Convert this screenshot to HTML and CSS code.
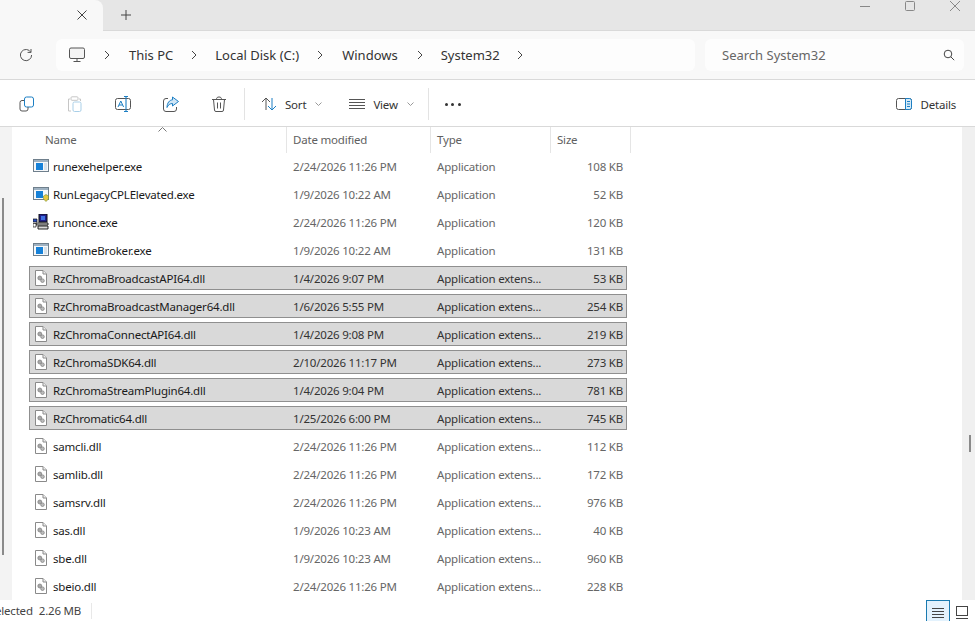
FILE: index.html
```html
<!DOCTYPE html>
<html lang="en">
<head>
<meta charset="utf-8">
<title>System32 - File Explorer</title>
<link rel="stylesheet" href="styles.css">
</head>
<body>
<svg class="defs" width="0" height="0" aria-hidden="true">
  <symbol id="dll" viewBox="0 0 16 16">
    <path d="M2.500 .5h7.500l3.500 3.500v11.500h-11z" fill="#fff" stroke="#8a8a8a"/>
    <path d="M10 .5v3.500h3.500" fill="#eee" stroke="#8a8a8a"/>
    <circle cx="6.800" cy="8" r="2" fill="#a8a8a8" stroke="#7a7a7a" stroke-width=".7"/>
    <circle cx="9.500" cy="10.700" r="1.800" fill="#bdbdbd" stroke="#7a7a7a" stroke-width=".7"/>
  </symbol>
  <symbol id="exe" viewBox="0 0 16 16">
    <rect x=".5" y="1.500" width="15" height="12" fill="#f6f8fa" stroke="#6f7f8c"/>
    <rect x="1" y="2" width="14" height="2" fill="#9fb2c2"/>
    <rect x="3" y="5" width="7" height="7" fill="#1681d8"/>
    <rect x="11" y="5" width="3" height="7" fill="#d8e2ea"/>
  </symbol>
  <symbol id="exe-shield" viewBox="0 0 16 16">
    <rect x=".5" y="1.500" width="15" height="12" fill="#f6f8fa" stroke="#6f7f8c"/>
    <rect x="1" y="2" width="14" height="2" fill="#9fb2c2"/>
    <rect x="3" y="5" width="7" height="7" fill="#1681d8"/>
    <path d="M10.500 10l2.500-1.500 2.500 1.500v3L13 15.500 10.500 13z" fill="#e8c840" stroke="#6f8f3a" stroke-width=".6"/>
  </symbol>
  <symbol id="setup" viewBox="0 0 16 16">
    <rect x="6" y="0" width="8" height="8" fill="#20208c" stroke="#111"/>
    <rect x="8" y="2" width="4" height="4" fill="#3e6fe0"/>
    <path d="M3 9h12v2H3zM5 12h10v3H5z" fill="#d9d9d9" stroke="#111" stroke-width=".9"/>
    <path d="M0 5h4v3H0z" fill="#2a4fc0" stroke="#111" stroke-width=".7"/>
    <path d="M0 9.500h3v3.500H0z" fill="#fff" stroke="#111" stroke-width=".7"/>
  </symbol>
</svg>

<header class="tabbar">
  <div class="tab">
    <svg class="tab-close" width="12" height="12" viewBox="0 0 12 12"><path d="M1.500 1.500l9 9M10.500 1.500l-9 9" stroke="#444" fill="none"/></svg>
  </div>
  <svg class="tab-new" width="12" height="12" viewBox="0 0 12 12"><path d="M6 1v10M1 6h10" stroke="#444" fill="none"/></svg>
  <div class="window-controls">
    <svg width="12" height="12" viewBox="0 0 12 12"><path d="M1 6.500h10" stroke="#888" fill="none"/></svg>
    <svg width="12" height="12" viewBox="0 0 12 12"><rect x="1.500" y="1.500" width="9" height="9" rx="1" stroke="#888" fill="none"/></svg>
    <svg width="12" height="12" viewBox="0 0 12 12"><path d="M1 1l10 10M11 1L1 11" stroke="#888" fill="none"/></svg>
  </div>
</header>

<nav class="addressbar">
  <svg class="refresh" width="14" height="14" viewBox="0 0 14 14"><path d="M11.800 4.200A5.600 5.600 0 1 0 12.600 7" stroke="#555" fill="none"/><path d="M8.600 4.400h3.400V1" stroke="#555" fill="none"/></svg>
  <div class="crumbs">
    <svg class="pc" width="16" height="16" viewBox="0 0 16 16"><rect x=".5" y="1" width="15" height="10.500" rx="1.500" fill="#f4f4f4" stroke="#555"/><path d="M8 11.500v2.500M4.500 14.500h7" stroke="#555" fill="none"/></svg>
    <svg class="chev first" width="6" height="10" viewBox="0 0 6 10"><path d="M1 1l4 4-4 4" stroke="#444" fill="none"/></svg><span class="crumb c-pc">This PC</span>
    <svg class="chev" width="6" height="10" viewBox="0 0 6 10"><path d="M1 1l4 4-4 4" stroke="#444" fill="none"/></svg><span class="crumb c-disk">Local Disk (C:)</span>
    <svg class="chev" width="6" height="10" viewBox="0 0 6 10"><path d="M1 1l4 4-4 4" stroke="#444" fill="none"/></svg><span class="crumb c-win">Windows</span>
    <svg class="chev" width="6" height="10" viewBox="0 0 6 10"><path d="M1 1l4 4-4 4" stroke="#444" fill="none"/></svg><span class="crumb c-sys">System32</span>
    <svg class="chev" width="6" height="10" viewBox="0 0 6 10"><path d="M1 1l4 4-4 4" stroke="#444" fill="none"/></svg>
  </div>
  <div class="search">
    <span>Search System32</span>
    <svg width="12" height="12" viewBox="0 0 12 12"><circle cx="5" cy="5" r="3.800" stroke="#444" fill="none"/><path d="M7.800 7.800l3.400 3.400" stroke="#444" fill="none"/></svg>
  </div>
</nav>

<div class="commandbar">
  <button class="cmd-icon"><svg width="16" height="16" viewBox="0 0 16 16"><rect x="5.500" y="1" width="9" height="10" rx="2" fill="none" stroke="#1c7fc4"/><path d="M5 4.500H3A2 2 0 0 0 1 6.500V13a2 2 0 0 0 2 2h4a2 2 0 0 0 2-2v-2" fill="none" stroke="#555"/></svg></button>
  <button class="cmd-icon"><svg width="16" height="16" viewBox="0 0 16 16"><path d="M3 3H1.500V15H4M12 3h1.500V5" fill="none" stroke="#c6c6c6"/><rect x="4" y=".8" width="7" height="3.500" rx="1" fill="none" stroke="#c6c6c6"/><rect x="6" y="6" width="8" height="9.500" rx="1.500" fill="none" stroke="#a9cfe8"/></svg></button>
  <button class="cmd-icon"><svg width="16" height="16" viewBox="0 0 16 16"><rect x=".5" y="2.500" width="15" height="11" rx="2" fill="none" stroke="#555"/><path d="M11 .5v15M9 .5h4M9 15.500h4" fill="none" stroke="#1c7fc4" stroke-width="1.100"/><path d="M3 11l2.800-6 2.800 6M4 9h3.600" fill="none" stroke="#1c7fc4"/></svg></button>
  <button class="cmd-icon"><svg width="16" height="16" viewBox="0 0 16 16"><path d="M5 2.500H3A2.500 2.500 0 0 0 .5 5v8A2.500 2.500 0 0 0 3 15.500h8a2.500 2.500 0 0 0 2.500-2.500v-2" fill="none" stroke="#555"/><path d="M9.500 1l6 4.500-6 4.500V7.500C7 7.500 5 9 4 11.500 4 7 6.500 4 9.500 3.800z" fill="#cfe5f5" stroke="#1c7fc4"/></svg></button>
  <button class="cmd-icon"><svg width="16" height="16" viewBox="0 0 16 16"><path d="M1 3.500h14M5.500 3.500C5.500 1.500 6.500 1 8 1s2.500.5 2.500 2.500M2.500 3.500l1 10.500a1.500 1.500 0 0 0 1.500 1.500h6a1.500 1.500 0 0 0 1.500-1.500l1-10.500M6.500 6.500v6M9.500 6.500v6" fill="none" stroke="#555"/></svg></button>
  <span class="divider"></span>
  <button class="cmd-text sort"><svg width="16" height="14" viewBox="0 0 16 14"><path d="M5 13V1M1 5l4-4 4 4" fill="none" stroke="#555"/><path d="M11 1v12M7 9l4 4 4-4" fill="none" stroke="#1c7fc4"/></svg><span>Sort</span><svg class="caret" width="7" height="4" viewBox="0 0 7 4"><path d="M.5.5l3 3 3-3" fill="none" stroke="#999"/></svg></button>
  <button class="cmd-text view"><svg width="16" height="10" viewBox="0 0 16 10"><path d="M0 .5h16M0 3.500h16M0 6.500h16M0 9.500h16" fill="none" stroke="#555"/></svg><span>View</span><svg class="caret" width="7" height="4" viewBox="0 0 7 4"><path d="M.5.5l3 3 3-3" fill="none" stroke="#999"/></svg></button>
  <span class="divider second"></span>
  <button class="more"><i></i><i></i><i></i></button>
  <button class="cmd-text details"><svg width="16" height="12" viewBox="0 0 16 12"><rect x=".5" y=".5" width="15" height="11" rx="2" fill="none" stroke="#555"/><path d="M9.500.5h4a2 2 0 0 1 2 2v7a2 2 0 0 1-2 2h-4z" fill="#d7ebf8" stroke="#1c7fc4"/><path d="M11 3.500h3M11 6h3M11 8.500h3" fill="none" stroke="#1c7fc4"/></svg><span>Details</span></button>
</div>

<main class="main">
  <aside class="navpane"><span class="nav-thumb"></span></aside>
  <section class="files">
    <div class="sort-arrow"><svg width="9" height="5" viewBox="0 0 9 5"><path d="M.5 4.500l4-4 4 4" fill="none" stroke="#777"/></svg></div>
    <div class="columns">
      <div class="col col-name">Name</div>
      <div class="col col-date">Date modified</div>
      <div class="col col-type">Type</div>
      <div class="col col-size">Size</div>
    </div>
    <div class="rows">
      <div class="row"><svg class="ico"><use href="#exe"/></svg><span class="name">runexehelper.exe</span><span class="date">2/24/2026 11:26 PM</span><span class="type">Application</span><span class="size">108 KB</span></div>
      <div class="row"><svg class="ico"><use href="#exe-shield"/></svg><span class="name">RunLegacyCPLElevated.exe</span><span class="date">1/9/2026 10:22 AM</span><span class="type">Application</span><span class="size">52 KB</span></div>
      <div class="row"><svg class="ico"><use href="#setup"/></svg><span class="name">runonce.exe</span><span class="date">2/24/2026 11:26 PM</span><span class="type">Application</span><span class="size">120 KB</span></div>
      <div class="row"><svg class="ico"><use href="#exe"/></svg><span class="name">RuntimeBroker.exe</span><span class="date">1/9/2026 10:22 AM</span><span class="type">Application</span><span class="size">131 KB</span></div>
      <div class="row selected"><svg class="ico"><use href="#dll"/></svg><span class="name">RzChromaBroadcastAPI64.dll</span><span class="date">1/4/2026 9:07 PM</span><span class="type">Application extens...</span><span class="size">53 KB</span></div>
      <div class="row selected"><svg class="ico"><use href="#dll"/></svg><span class="name">RzChromaBroadcastManager64.dll</span><span class="date">1/6/2026 5:55 PM</span><span class="type">Application extens...</span><span class="size">254 KB</span></div>
      <div class="row selected"><svg class="ico"><use href="#dll"/></svg><span class="name">RzChromaConnectAPI64.dll</span><span class="date">1/4/2026 9:08 PM</span><span class="type">Application extens...</span><span class="size">219 KB</span></div>
      <div class="row selected"><svg class="ico"><use href="#dll"/></svg><span class="name">RzChromaSDK64.dll</span><span class="date">2/10/2026 11:17 PM</span><span class="type">Application extens...</span><span class="size">273 KB</span></div>
      <div class="row selected"><svg class="ico"><use href="#dll"/></svg><span class="name">RzChromaStreamPlugin64.dll</span><span class="date">1/4/2026 9:04 PM</span><span class="type">Application extens...</span><span class="size">781 KB</span></div>
      <div class="row selected"><svg class="ico"><use href="#dll"/></svg><span class="name">RzChromatic64.dll</span><span class="date">1/25/2026 6:00 PM</span><span class="type">Application extens...</span><span class="size">745 KB</span></div>
      <div class="row"><svg class="ico"><use href="#dll"/></svg><span class="name">samcli.dll</span><span class="date">2/24/2026 11:26 PM</span><span class="type">Application extens...</span><span class="size">112 KB</span></div>
      <div class="row"><svg class="ico"><use href="#dll"/></svg><span class="name">samlib.dll</span><span class="date">2/24/2026 11:26 PM</span><span class="type">Application extens...</span><span class="size">172 KB</span></div>
      <div class="row"><svg class="ico"><use href="#dll"/></svg><span class="name">samsrv.dll</span><span class="date">2/24/2026 11:26 PM</span><span class="type">Application extens...</span><span class="size">976 KB</span></div>
      <div class="row"><svg class="ico"><use href="#dll"/></svg><span class="name">sas.dll</span><span class="date">1/9/2026 10:23 AM</span><span class="type">Application extens...</span><span class="size">40 KB</span></div>
      <div class="row"><svg class="ico"><use href="#dll"/></svg><span class="name">sbe.dll</span><span class="date">1/9/2026 10:23 AM</span><span class="type">Application extens...</span><span class="size">960 KB</span></div>
      <div class="row"><svg class="ico"><use href="#dll"/></svg><span class="name">sbeio.dll</span><span class="date">2/24/2026 11:26 PM</span><span class="type">Application extens...</span><span class="size">228 KB</span></div>
    </div>
  </section>
  <aside class="vscroll"><span class="vscroll-thumb"></span></aside>
</main>

<footer class="statusbar">
  <span class="status-text">elected</span>
  <span class="status-size">2.26 MB</span>
  <span class="status-sep"></span>
  <div class="viewbtns">
    <button class="viewbtn active"><svg width="12" height="11" viewBox="0 0 12 11"><path d="M0 .5h12M0 3.500h12M0 6.500h12M0 9.500h12" fill="none" stroke="#444"/></svg></button>
    <button class="viewbtn"><svg width="12" height="13" viewBox="0 0 12 13"><rect x=".5" y=".5" width="11" height="9" fill="none" stroke="#444"/><path d="M0 12.500h12" fill="none" stroke="#444"/></svg></button>
  </div>
</footer>
</body>
</html>
```

FILE: styles.css
```css
* { box-sizing: border-box; }
html, body { height: 100%; }
body {
  margin: 0;
  width: 975px;
  height: 621px;
  display: flex;
  flex-direction: column;
  overflow: hidden;
  background: #fff;
  color: #1a1a1a;
  font-family: "Noto Sans", "Open Sans", sans-serif;
  font-size: 11.5px;
  letter-spacing: -.2px;
}
button { border: 0; padding: 0; background: none; font: inherit; letter-spacing: inherit; color: inherit; display: flex; align-items: center; }
svg { display: block; flex: none; }
.defs { position: absolute; }

.tabbar {
  height: 31px;
  flex: none;
  display: flex;
  align-items: flex-start;
  background: #e6e6e6;
  border-bottom: 1px solid #d9d9d9;
}
.tab {
  width: 103px;
  height: 31px;
  background: #f8f8f8;
  border-top-right-radius: 8px;
  padding: 9px 0 0 76px;
}
.tab-new { margin: 9px 0 0 17px; }
.window-controls {
  margin-left: auto;
  display: flex;
  gap: 33px;
  padding: 0 14px 0 0;
}
.addressbar {
  height: 49px;
  flex: none;
  display: flex;
  align-items: center;
  background: #f8f8f8;
  border-bottom: 1px solid #d9d9d9;
  padding: 0 11px 0 19px;
}
.refresh { margin-right: 23px; }
.crumbs {
  width: 639px;
  height: 32px;
  background: #fdfdfd;
  border-radius: 6px;
  display: flex;
  align-items: center;
  font-size: 13px;
  letter-spacing: 0;
  color: #333;
  padding-left: 13px;
}
.crumb { white-space: nowrap; }
.chev { margin: 0 18px; }
.chev.first { margin-left: 19px; }
.c-pc { margin-left: 1px; }
.c-win { margin: 0 1px; }
.c-sys { margin-right: -1px; }
.search {
  margin-left: 10px;
  flex: 1;
  height: 32px;
  background: #fdfdfd;
  border-radius: 6px;
  display: flex;
  align-items: center;
  justify-content: space-between;
  padding: 0 9px 0 17px;
  font-size: 13px;
  letter-spacing: 0;
  color: #666;
}
.commandbar {
  height: 47px;
  flex: none;
  display: flex;
  align-items: center;
  padding: 2px 19px 0;
  border-bottom: 1px solid #d9d9d9;
  background: #fff;
}
.cmd-icon { width: 16px; margin-right: 32px; }
.cmd-icon:nth-child(5) { margin-right: 17px; }
.divider { width: 1px; height: 32px; background: #e3e3e3; }
.divider.second { margin: 0 16px 0 14px; }
.cmd-text { gap: 8px; color: #333; }
.sort { margin-left: 16px; }
.view { margin-left: 27px; }
.caret { margin-left: 1px; }
.more { gap: 3.500px; }
.more i { width: 3px; height: 3px; border-radius: 50%; background: #333; }
.details { margin-left: auto; }

.main { flex: 1; min-height: 0; display: flex; }
.navpane { width: 12px; flex: none; background: #f3f3f3; padding: 71px 0 0 2px; }
.nav-thumb { display: block; width: 2px; height: 357px; background: #8a8a8a; }
.files { flex: 1; min-width: 0; position: relative; overflow: hidden; padding-left: 17px; }
.sort-arrow { position: absolute; left: 146px; top: 0; }
.columns { height: 27px; display: flex; color: #5f5f5f; }
.col { height: 26px; display: flex; align-items: center; padding: 0 0 2px 6px; border-right: 1px solid #e5e5e5; }
.col-name { width: 258px; padding-left: 16px; }
.col-date { width: 144px; }
.col-type { width: 120px; }
.col-size { width: 80px; }
.rows { display: flex; flex-direction: column; gap: 4px; }
.row {
  width: 598px;
  height: 24px;
  flex: none;
  display: flex;
  align-items: center;
  padding: 0 3px;
  border: 1px solid transparent;
  color: #666;
  white-space: nowrap;
}
.row.selected { background: #d9d9d9; border-color: #8f8f8f; color: #333; }
.ico { width: 16px; height: 16px; margin-right: 4px; }
.name { width: 240px; color: #1a1a1a; }
.date { width: 144px; }
.type { width: 110px; }
.size { flex: 1; text-align: right; }
.vscroll { width: 13px; flex: none; background: #f0f0f0; padding: 308px 0 0 7px; }
.vscroll-thumb { display: block; width: 2px; height: 17px; background: #8a8a8a; }

.statusbar { height: 21px; flex: none; display: flex; align-items: center; color: #444; }
.status-text { margin-left: -5px; }
.status-size { margin-left: 6px; }
.status-sep { width: 1px; height: 16px; background: #e8e8e8; margin-left: 10px; }
.viewbtns { margin-left: auto; display: flex; align-self: flex-start; padding-right: 1px; }
.viewbtn { width: 24px; height: 24px; justify-content: center; align-items: flex-start; padding-top: 6px; }
.viewbtn.active { background: #e3f2fd; border: 1px solid #1a7ab0; padding-top: 7px; }
```
